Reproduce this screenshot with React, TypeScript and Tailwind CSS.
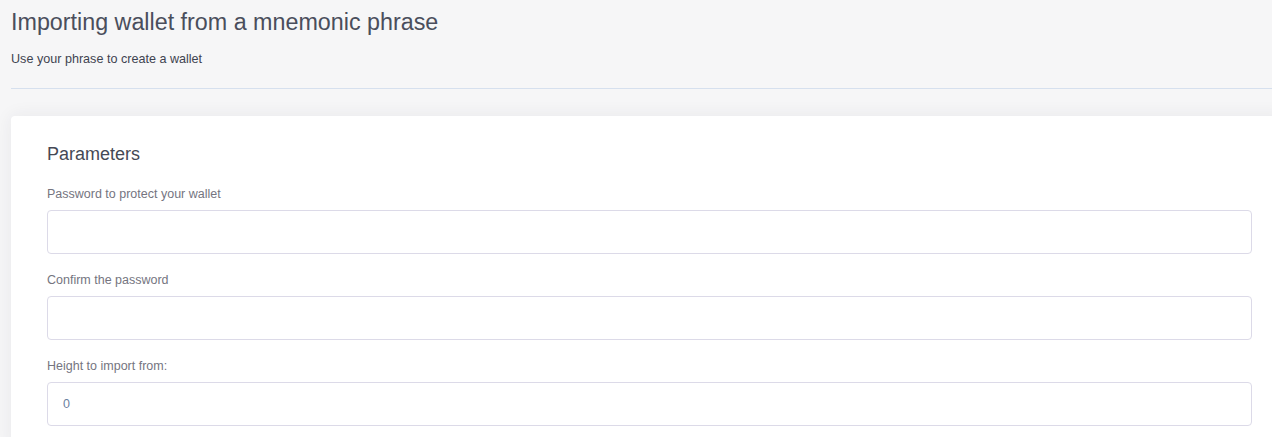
const FIELDS = [
  { label: "Password to protect your wallet", value: "", type: "password" },
  { label: "Confirm the password", value: "", type: "password" },
  { label: "Height to import from:", value: "0", type: "text" },
];

export default function App() {
  return (
    <div className="min-h-screen w-full overflow-hidden bg-[#f6f6f7] px-[11px]"
      style={{ fontFamily: '"Liberation Sans", Arial, sans-serif' }}>

      <h1 className="mt-[8px] text-[23.3px] leading-[28px] text-[#4a4e5c] whitespace-nowrap">
        Importing wallet from a mnemonic phrase
      </h1>
      <p className="mt-[15px] text-[12.6px] leading-[16px] text-[#3f4350]">
        Use your phrase to create a wallet
      </p>

      <div className="mt-[21px] h-px w-[1300px] bg-[#d6e0ee]" />

      <div className="mt-[27px] w-[1277px] rounded-[4px] bg-white pl-[36px] pr-[36px] pt-[26px] pb-6 shadow-[0_0_18px_rgba(40,40,70,0.07)]">
        <h2 className="text-[18px] leading-[24px] text-[#454955]">Parameters</h2>

        <div className="mt-[19px] flex flex-col gap-[17px]">
          {FIELDS.map((f) => (
            <div key={f.label} className="flex flex-col gap-[8px]">
              <label className="pt-[1px] text-[12.5px] leading-[16px] text-[#75757f]">{f.label}</label>
              <input
                type={f.type}
                defaultValue={f.value}
                className="h-[44px] w-full rounded-[4px] border border-[#dcdae8] bg-white px-[15px] text-[12.5px] text-[#6b80a0] outline-none"
                style={{ fontFamily: '"Liberation Sans", Arial, sans-serif' }}
              />
            </div>
          ))}
        </div>
      </div>
    </div>
  );
}
